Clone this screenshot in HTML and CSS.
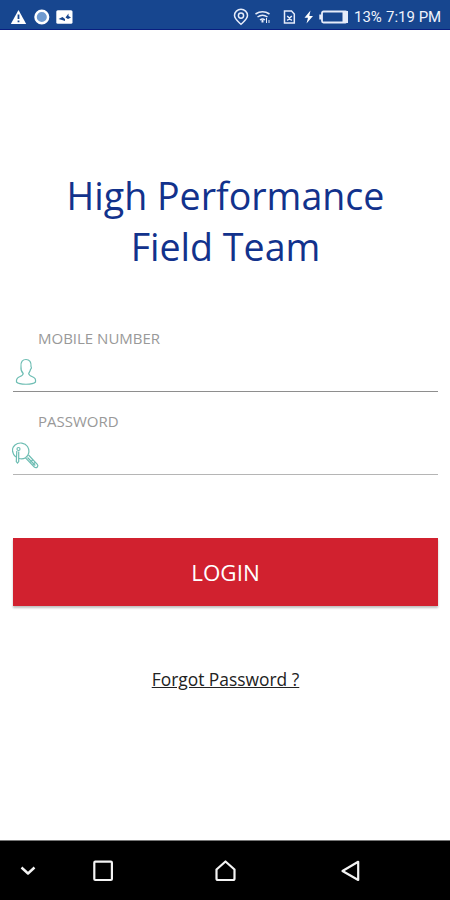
FILE: index.html
```html
<!DOCTYPE html>
<html lang="en">

<head>
    <meta charset="utf-8">
    <title>High Performance Field Team</title>
    <link rel="stylesheet" href="styles.css">
</head>

<body>

    <header class="status-bar">
        <svg class="alerts" width="66" height="18" viewBox="0 0 66 18">
            <path fill="#fff" d="M8.500 2 L16.200 16 H0.800 Z" />
            <path stroke="#17468f" stroke-width="1.800" d="M8.500 6.500 V11 M8.500 12.500 V14.300" />
            <circle cx="31.800" cy="9" r="6.300" fill="#6f9ad0" stroke="#fff" stroke-width="2.500" />
            <rect x="46.300" y="2.300" width="16.200" height="13.400" rx="1.500" fill="#fff" />
            <path fill="#17468f" d="M48.500 11 L52.500 9 L55 11 V13 L52 12 Z M55.500 9.500 L58.500 5.500 V8 L61 9.500 L58 11 Z" />
        </svg>
        <svg class="signals" width="118" height="18" viewBox="0 0 118 18">
            <g fill="none" stroke="#e6ecfa" stroke-width="1.500">
                <path d="M9 16.300 C5.500 13 2.500 10.800 2.500 7.500 A6.500 6.200 0 0 1 15.500 7.500 C15.500 10.800 12.500 13 9 16.300 Z" />
                <circle cx="9" cy="7.600" r="2.600" />
                <path d="M23.500 6 Q30.500 1.500 37.500 6 M25.500 9 Q30.500 5.500 35.500 9 M28 12 Q30.500 10.200 33 12" />
                <path d="M30.500 12 V14.500" stroke-width="2" />
                <path d="M34.500 10 V15 M37 12 V15" stroke-width="1" />
                <path d="M52.500 3 H59.500 L62.300 6 V15 H52.500 Z M55.200 8 L59.800 12.500 M59.800 8 L55.200 12.500" />
                <rect x="90" y="3.500" width="25" height="11" rx="1.500" stroke-width="1.800" />
            </g>
            <path fill="#fff" d="M78.500 2.500 L72.500 9.800 H76 L74.500 15.500 L81 8 H77.300 Z" />
            <path fill="#e6ecfa" d="M87.300 6.500 H90 V11.500 H87.300 Z M110.500 3 H116 V15 H110.500 Z" />
        </svg>
        <span class="battery">13%</span>
        <span class="clock">7:19 PM</span>
    </header>

    <main class="login">
        <h1 class="title">High Performance<br>Field Team</h1>

        <div class="field">
            <span class="label">MOBILE NUMBER</span>
            <svg class="icon" width="28" height="28" viewBox="0 0 28 28">
                <path d="M10.200 15.500 C8.300 13.500 7.700 11.500 8 9 C7.300 3.500 10 1.500 13 1.500 C16.500 1.500 18.500 4 18 8.500 C18.800 9.500 18.300 10.800 17.500 11.300 C17.200 13.500 16 14.500 15.700 15.500 C15.800 17.500 17.500 18 20 19 C22.500 20 22.800 22 22.500 24 C20 27 6 27 3.500 24 C3.200 21.500 3.800 20 6 19 C8.500 18 10.200 17.500 10.200 15.500 Z" />
            </svg>
        </div>

        <div class="field field-password">
            <span class="label">PASSWORD</span>
            <svg class="icon" width="28" height="28" viewBox="0 0 28 28">
                <path d="M3.800 15 C-0.500 11 -0.500 6 3 3 C7 -0.300 13 0.700 15.500 4.500 C18 8.500 17 13.500 13.500 15.800 C11.500 17 9 17.200 7 16.500" />
                <circle cx="6.500" cy="7" r="1.500" />
                <path d="M4.800 9 L4.300 19.500 L5.500 21 L6.700 19.500 V9.500" />
                <path d="M13.500 15.800 L22.300 25 Q24 26.300 25.300 25 Q26.500 23.700 25.300 22.300 L16.500 13 M15.500 15.500 L23.300 23.500 M18.500 20 L20.500 18 M21 22.500 L23 20.500" />
            </svg>
        </div>

        <button class="login-button" type="button">LOGIN</button>
        <a class="forgot" href="#">Forgot Password ?</a>
    </main>

    <nav class="nav-bar">
        <svg width="450" height="59" viewBox="0 0 450 59">
            <g fill="none" stroke="#f4f4f4" stroke-width="2.200" stroke-linejoin="round">
                <path d="M21.500 26.500 L28 32.500 L34.500 26.500" stroke-width="2.400" />
                <rect x="94.300" y="20.700" width="17.600" height="18.300" rx="1" />
                <path d="M225.500 20.500 L234.500 28.500 V37.500 Q234.500 39 233 39 H218 Q216.500 39 216.500 37.500 V28.500 Z" />
                <path d="M358.200 20.800 V39 L342.500 30 Z" />
            </g>
        </svg>
    </nav>

</body>

</html>
```
FILE: styles.css
```css
* {
    box-sizing: border-box;
}

body {
    margin: 0;
    height: 900px;
    display: flex;
    flex-direction: column;
    background-color: #fff;
    font-family: "Open Sans", "Noto Sans", sans-serif;
}

.status-bar {
    height: 30px;
    padding: 4px 8px 0 10px;
    display: flex;
    align-items: center;
    background-color: #17468f;
    border-bottom: 1px solid #0a1f80;
    color: #f0f3fc;
    font-family: Roboto, sans-serif;
    font-size: 15px;
    line-height: 18px;
    white-space: nowrap;
}

.signals {
    margin-left: auto;
}

.battery {
    width: 32px;
    margin-left: 4px;
}

.clock {
    width: 56px;
}

.login {
    flex: 1;
    padding: 140px 12px 0 13px;
    display: flex;
    flex-direction: column;
}

.title {
    margin: 0 0 55px;
    color: #12328c;
    font-size: 37.6px;
    font-weight: 400;
    line-height: 51px;
    text-align: center;
}

.field {
    height: 65px;
    margin-bottom: 18px;
    display: flex;
    flex-direction: column;
    border-bottom: 1px solid #8e8e8e;
}

.field-password {
    margin-bottom: 64px;
    border-bottom-color: #b5b5b5;
}

.label {
    margin: 0 0 9px 25px;
    color: #999;
    font-size: 15px;
    line-height: 22px;
}

.icon {
    fill: none;
    stroke: #6dbdb3;
    stroke-width: 1.2;
}

.field-password .icon {
    margin: 1px 0 0 -1px;
}

.login-button {
    height: 68px;
    margin-top: -1px;
    padding: 0;
    border: 0;
    background-color: #d1212f;
    box-shadow: 0 2px 2px rgba(0, 0, 0, 0.25);
    color: #fff;
    font-family: inherit;
    font-size: 22.4px;
}

.forgot {
    margin-top: 61px;
    align-self: center;
    color: #222;
    font-size: 17.4px;
    line-height: 24px;
}

.nav-bar {
    height: 60px;
    border-top: 1px solid #777;
    background-color: #000;
}
```
